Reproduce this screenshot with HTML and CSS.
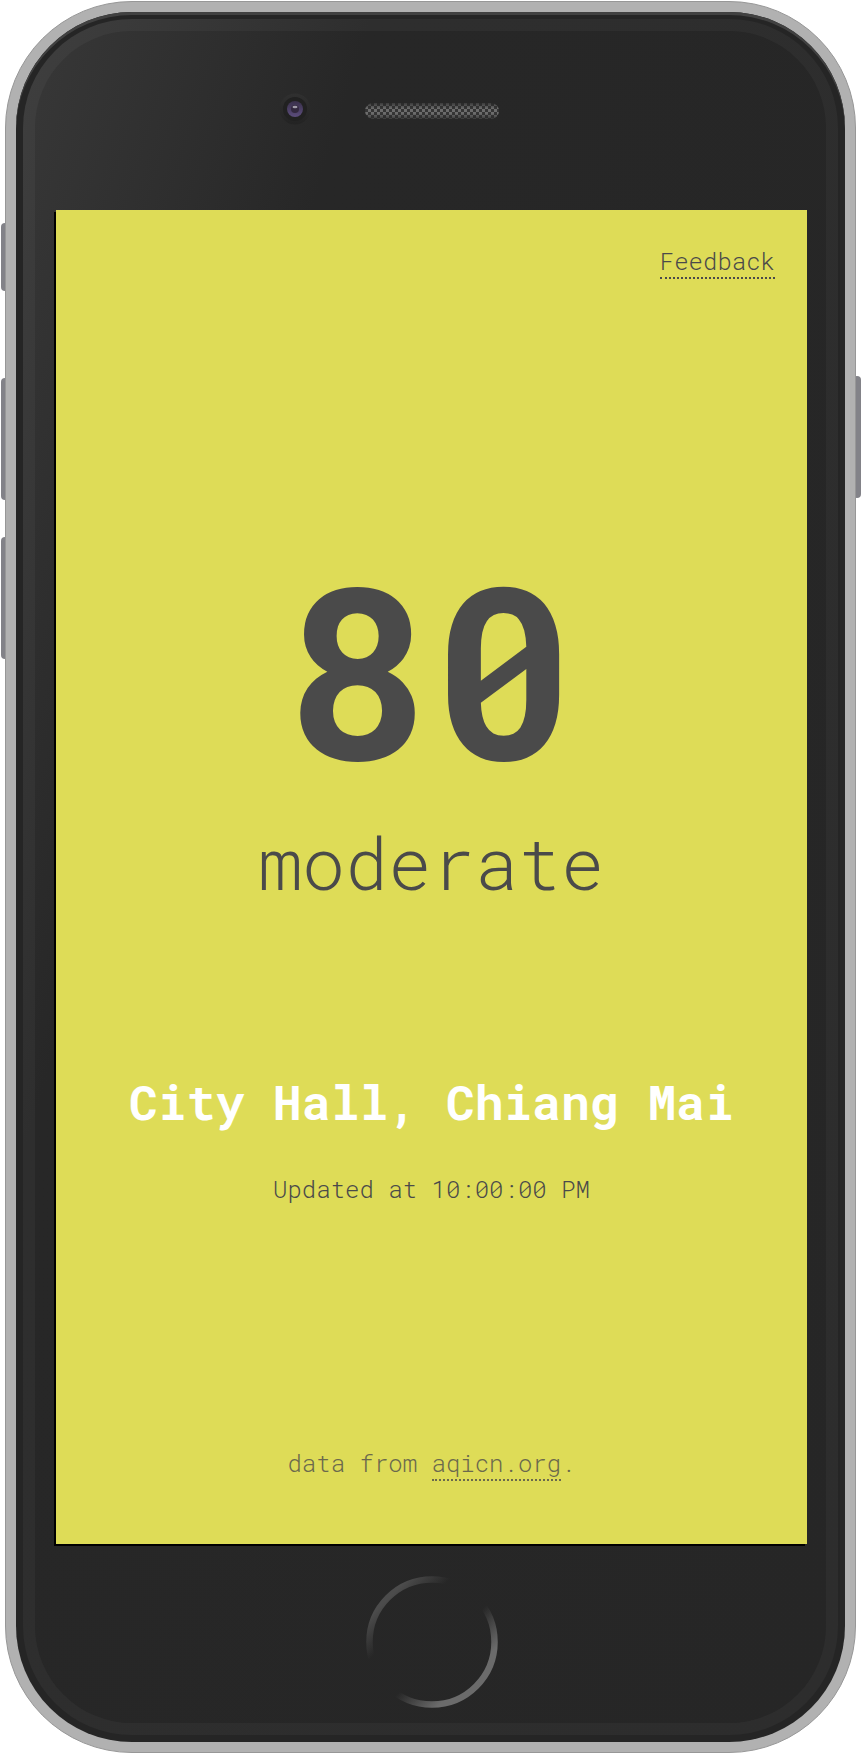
FILE: index.html
```html
<!DOCTYPE html>
<html lang="en">
<head>
<meta charset="utf-8">
<meta name="viewport" content="width=device-width, initial-scale=1">
<title>Air quality</title>
<link rel="stylesheet" href="styles.css">
</head>
<body>
<div class="device">
  <span class="key key-mute"></span>
  <span class="key key-up"></span>
  <span class="key key-down"></span>
  <span class="key key-power"></span>
  <div class="shell">
    <div class="face">
      <div class="glass">
        <div class="bezel bezel-top">
          <svg class="camera" viewBox="0 0 32 32" aria-hidden="true">
            <defs>
              <linearGradient id="rim" x1="0" y1="0" x2="0" y2="1">
                <stop offset="0" stop-color="#303030"/>
                <stop offset="1" stop-color="#232323"/>
              </linearGradient>
              <linearGradient id="lens" x1="0" y1="0" x2="0" y2="1">
                <stop offset="0" stop-color="#39304a"/>
                <stop offset="1" stop-color="#5c4d7c"/>
              </linearGradient>
            </defs>
            <circle cx="16" cy="16" r="15.5" fill="url(#rim)"/>
            <circle cx="16" cy="16" r="12" fill="#212121"/>
            <circle cx="16" cy="16" r="8" fill="url(#lens)"/>
            <circle cx="16" cy="16" r="4" fill="#33293f"/>
            <ellipse cx="16" cy="14" rx="2.5" ry="1.3" fill="#a09ba8"/>
          </svg>
          <div class="speaker"></div>
        </div>
        <div class="screen">
          <header class="top">
            <a class="link" href="#feedback">Feedback</a>
          </header>
          <main class="reading">
            <p class="index">80</p>
            <p class="level">moderate</p>
            <h1 class="station">City Hall, Chiang Mai</h1>
            <p class="updated">Updated at 10:00:00 PM</p>
          </main>
          <footer class="source">data from <a class="link" href="#aqicn">aqicn.org</a>.</footer>
        </div>
        <div class="bezel bezel-bottom">
          <svg class="home" viewBox="0 0 132 132" aria-hidden="true">
            <defs>
              <linearGradient id="ring" x1="0" y1="0" x2="1" y2="1">
                <stop offset="0.15" stop-color="#4c4c4c"/>
                <stop offset="0.32" stop-color="#4c4c4c" stop-opacity="0"/>
                <stop offset="0.57" stop-color="#6b6b6b" stop-opacity="0"/>
                <stop offset="0.78" stop-color="#6b6b6b"/>
              </linearGradient>
            </defs>
            <circle cx="66" cy="66" r="62.5" fill="none" stroke="url(#ring)" stroke-width="6.5"/>
          </svg>
        </div>
      </div>
    </div>
  </div>
</div>
</body>
</html>
```
FILE: styles.css
```css
* {
  box-sizing: border-box;
}

body {
  margin: 0;
  background: #fff;
  color: #4a4a4a;
  font-family: "Roboto Mono", "Liberation Mono", monospace;
  font-size: 24px;
  font-weight: 300;
  line-height: 32px;
}

.device {
  position: relative;
  display: flex;
  min-height: 100vh;
  padding: 1px 6px 1px 5px;
}

.key {
  position: absolute;
  width: 8px;
  height: 122px;
  border-radius: 4px;
  background: #828288;
}

.key-mute {
  left: 1px;
  top: 223px;
  height: 68px;
}

.key-up {
  left: 1px;
  top: 378px;
}

.key-down {
  left: 1px;
  top: 537px;
}

.key-power {
  right: 1px;
  top: 376px;
}

.shell {
  position: relative;
  display: flex;
  flex: 1;
  padding: 10px;
  border: 1px solid #979797;
  border-radius: 127px;
  background: #b1b1b1;
}

.face {
  display: flex;
  flex: 1;
  padding: 7px;
  border-radius: 116px;
  background: #252525;
  box-shadow: inset 0 3px 0 #414141;
}

.glass {
  display: flex;
  flex: 1;
  flex-direction: column;
  padding: 0 19px 0 21px;
  border: 12px solid rgba(255, 255, 255, 0.035);
  border-radius: 109px;
  background: linear-gradient(107deg, #383838 0%, #272727 26%, #262626 100%) border-box;
}

.bezel {
  height: 179px;
}

.bezel-top {
  display: grid;
  grid-template-columns: 1fr 134px 1fr;
  align-items: center;
  padding-bottom: 20px;
}

.camera {
  width: 32px;
  height: 32px;
  margin: 0 54px 3px 0;
  justify-self: end;
}

.speaker {
  height: 16px;
  border-radius: 8px;
  background:
    linear-gradient(rgba(38, 38, 38, 0.7), transparent 35%, transparent 65%, rgba(38, 38, 38, 0.7)),
    repeating-conic-gradient(#6c6c6c 0 25%, #353535 0 50%) 0 0 / 6px 6px;
}

.bezel-bottom {
  display: flex;
  align-items: center;
  justify-content: center;
  padding-top: 16px;
}

.home {
  width: 132px;
  height: 132px;
}

.screen {
  display: flex;
  flex: 1;
  flex-direction: column;
  background: #dedc57;
  box-shadow: -2px 2px 0 #000;
}

.link {
  border-bottom: 2px dotted currentColor;
  color: inherit;
  text-decoration: none;
}

.top {
  padding: 35px 32px 0;
  text-align: right;
}

.reading {
  display: flex;
  flex: 1;
  flex-direction: column;
  justify-content: center;
  padding-top: 20px;
  text-align: center;
}

.index {
  margin: 0;
  font-size: 240px;
  font-weight: 700;
  line-height: 256px;
}

.level {
  margin: 20px 0 159px;
  font-size: 72px;
  line-height: 96px;
}

.station {
  margin: 0 0 39px;
  color: #fff;
  font-size: 48px;
  font-weight: 700;
  line-height: 64px;
}

.updated {
  margin: 0;
}

.source {
  padding-bottom: 65px;
  color: #6b694d;
  text-align: center;
}
```
